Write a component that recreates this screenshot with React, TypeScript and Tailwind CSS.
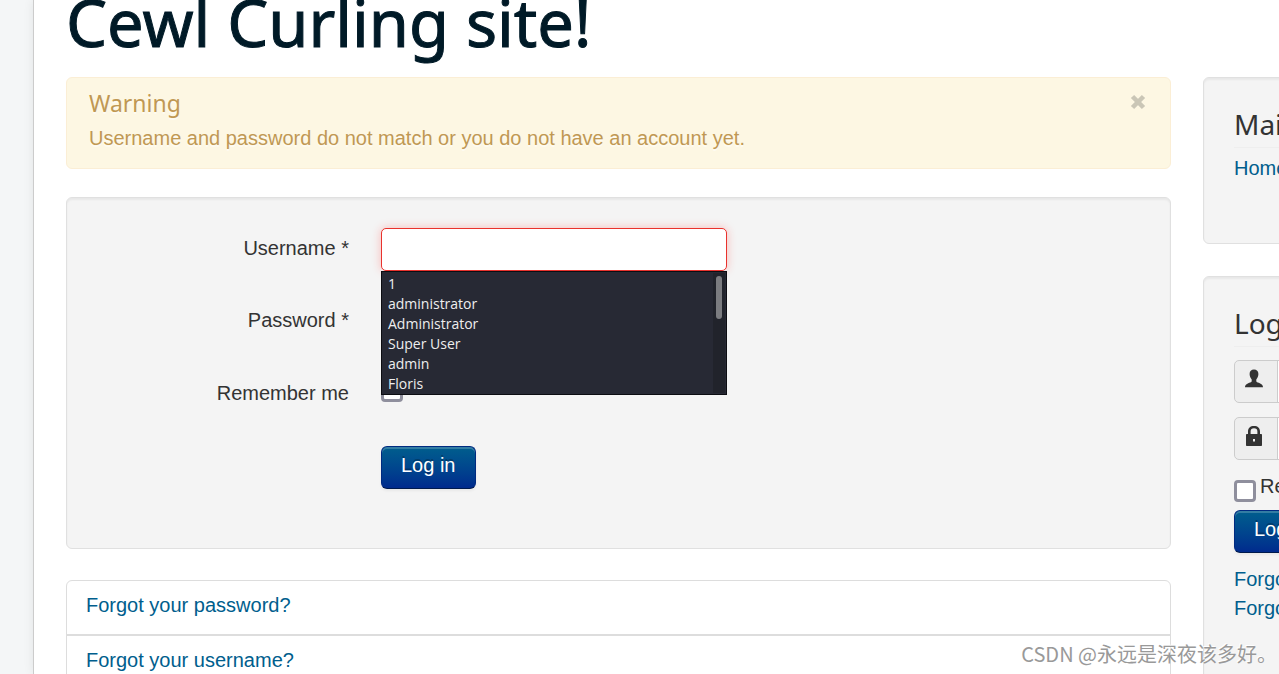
import { X } from 'lucide-react';

const suggestions = ['1', 'administrator', 'Administrator', 'Super User', 'admin', 'Floris'];

const well =
  "rounded-md border border-[#e0e0e0] bg-[#f4f4f4] shadow-[inset_0_2px_2px_rgba(0,0,0,0.05)]";
const primaryButton =
  "h-[43px] rounded-md border border-[#002a80] border-b-[#001a4d] bg-linear-to-b from-[#005e8d] to-[#002a8d] px-[19px] pb-1 text-white shadow-[inset_0_2px_0_rgba(255,255,255,0.2),0_2px_3px_rgba(0,0,0,0.05)] [text-shadow:0_-2px_0_rgba(0,0,0,0.25)]";
const checkbox =
  "size-[22px] shrink-0 appearance-none rounded-[4px] border-3 border-[#8f8f9d] bg-white";
const textInput = "h-[43px] w-full rounded-[5px] border border-[#ccc] bg-white px-2 outline-none";
const sideHeading =
  "h-[38px] border-b border-[#eee] font-['Noto_Sans'] text-[28px] leading-[28px] text-[#333] whitespace-nowrap";
const addon =
  "flex h-[43px] w-11 shrink-0 justify-center rounded-l-[5px] border border-[#ccc] bg-[#eee] pr-1 pt-2";

function UserIcon() {
  return (
    <svg viewBox="0 0 18 20" className="h-5 w-[18px] fill-[#333]">
      <path d="M9 0.500c2.700 0 4.400 1.700 4.400 4.500 0 2.200-.9 4.200-2.100 5.400v1.600c0 .7.600 1.200 1.500 1.600 2.700 1 5.200 1.900 5.200 4.600H0c0-2.700 2.500-3.600 5.200-4.600.9-.4 1.500-.9 1.500-1.600v-1.600c-1.200-1.200-2.100-3.200-2.100-5.400C4.600 2.200 6.300.5 9 .5z" />
    </svg>
  );
}

function LockIcon() {
  return (
    <svg viewBox="0 0 18 22" className="h-[22px] w-[18px] fill-[#333]">
      <path
        fillRule="evenodd"
        d="M3 8V5.500C3 2 5.200 0 9 0s6 2 6 5.500V8h1c.6 0 1 .4 1 1v10c0 .6-.4 1-1 1H2c-.6 0-1-.4-1-1V9c0-.6.4-1 1-1zm2.600 0h6.800V5.500c0-2-1.200-3.200-3.400-3.200S5.600 3.500 5.600 5.500zM8 13v2.500h2V13z"
      />
    </svg>
  );
}

function Suggestions() {
  return (
    <div className="absolute inset-x-0 top-full z-10 h-[124px] border border-[#0c0d12] bg-[#272934] pt-[2px] font-['Open_Sans'] text-[14px] leading-5 text-[#eee]">
      <ul>
        {suggestions.map((name) => (
          <li key={name} className="px-[6px]">{name}</li>
        ))}
      </ul>
      <div className="absolute inset-y-px right-px w-3 bg-[#21232b]">
        <div className="mx-auto mt-[3px] h-[43px] w-[6px] rounded-full bg-[#7b7c80]" />
      </div>
    </div>
  );
}

function LoginForm() {
  return (
    <form className={`${well} mt-7 h-[352px] pt-[30px]`} autoComplete="off">
      <div className="grid grid-cols-[282px_346px] gap-x-8 gap-y-[29px] text-[#333]">
        <label htmlFor="username" className="pt-[6px] text-right">Username *</label>
        <div className="relative">
          <input
            id="username"
            type="text"
            className="block h-[43px] w-full rounded-[5px] border border-[#e9322d] bg-white px-2 shadow-[0_0_10px_#f8b9b7] outline-none"
          />
          <Suggestions />
        </div>
        <label htmlFor="password" className="pt-[6px] text-right">Password *</label>
        <input id="password" type="password" className={textInput} />
        <label htmlFor="remember" className="h-[45px] pt-[7px] text-right">Remember me</label>
        <div className="pt-2">
          <input id="remember" type="checkbox" className={`${checkbox} block`} />
        </div>
        <button type="button" className={`${primaryButton} col-start-2 justify-self-start`}>Log in</button>
      </div>
    </form>
  );
}

function Sidebar() {
  return (
    <aside className="w-[340px] shrink-0 text-[#005e8d]">
      <section className={`${well} h-[167px] px-[30px] pt-8`}>
        <h3 className={sideHeading}>Main Menu</h3>
        <a href="#" className="mt-[6px] block">Home</a>
      </section>
      <section className={`${well} mt-8 h-[460px] px-[30px] pt-8`}>
        <h3 className={sideHeading}>Login Form</h3>
        <div className="mt-[13px] flex">
          <label htmlFor="side-username" className={addon} aria-label="Username"><UserIcon /></label>
          <input id="side-username" type="text" className="-ml-px h-[43px] w-40 border border-[#ccc] bg-white px-2" />
        </div>
        <div className="mt-[14px] flex">
          <label htmlFor="side-password" className={addon} aria-label="Password"><LockIcon /></label>
          <input id="side-password" type="password" className="-ml-px h-[43px] w-40 border border-[#ccc] bg-white px-2" />
        </div>
        <div className="mt-3 flex h-[38px] gap-1 text-[#333]">
          <input id="side-remember" type="checkbox" className={`${checkbox} mt-2`} />
          <label htmlFor="side-remember">Remember Me</label>
        </div>
        <button type="button" className={primaryButton}>Log in</button>
        <ul className="mt-3">
          <li><a href="#">Forgot your username?</a></li>
          <li><a href="#">Forgot your password?</a></li>
        </ul>
      </section>
    </aside>
  );
}

export default function App() {
  return (
    <div className="relative h-screen overflow-hidden bg-[#f4f6f7] pl-[33px] font-['Liberation_Sans',Arial,sans-serif] text-[20px] leading-[29px]">
      <div className="flow-root h-full border-l border-[#ccc] bg-white pl-8 shadow-[0_0_10px_rgba(0,0,0,0.08)]">
        <h1 className="-mt-6 h-[101px] whitespace-nowrap font-['Noto_Sans'] text-[65px] leading-[92px] text-[#001a27] [-webkit-text-stroke:1px_#001a27]">
          Cewl Curling site!
        </h1>
        <div className="-mr-[264px] flex gap-8">
          <main className="min-w-0 flex-1">
            <div className="flex h-[92px] justify-between rounded-md border border-[#fbeed5] bg-[#fdf7e3] pt-[11px] pr-[21px] pl-[22px] text-[#c09853] [text-shadow:0_2px_0_rgba(255,255,255,0.5)]">
              <div>
                <h4 className="font-['Noto_Sans'] text-[23px] leading-[28px]">Warning</h4>
                <p className="mt-[7px]">Username and password do not match or you do not have an account yet.</p>
              </div>
              <button type="button" aria-label="Close" className="self-start pt-[2px] text-[#cac6b6]">
                <X className="size-[22px]" strokeWidth={5} strokeLinecap="butt" />
              </button>
            </div>

            <LoginForm />

            <ul className="mt-[31px] rounded-t-md border border-[#ddd] text-[#005e8d]">
              <li className="h-[54px] border-b border-[#ddd] px-[19px] pt-[10px]"><a href="#">Forgot your password?</a></li>
              <li className="h-[55px] border-t border-[#ddd] px-[19px] pt-[10px]"><a href="#">Forgot your username?</a></li>
            </ul>
          </main>
          <Sidebar />
        </div>
      </div>
      <p className="absolute right-[2px] bottom-[6px] font-['Noto_Sans_CJK_SC',sans-serif] text-[20px] text-[#999] [text-shadow:-1px_-1px_0_#fff]">
        CSDN @永远是深夜该多好。
      </p>
    </div>
  );
}
